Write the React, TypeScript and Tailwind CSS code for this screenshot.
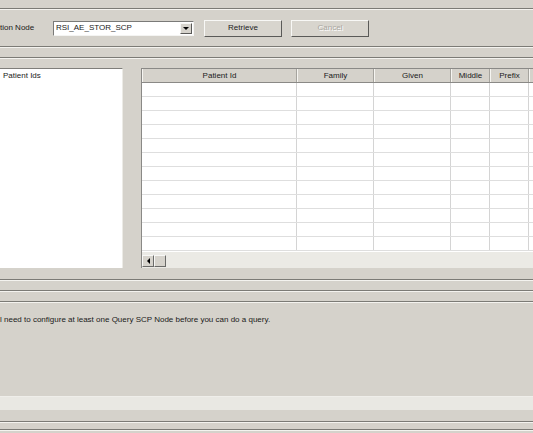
const Etch = () => <div className="h-[2px] border-t border-b border-[#7c7b76] border-b-[#f4f3ef]" />

const columns = [
  { name: "Patient Id", w: "w-[155px]" },
  { name: "Family", w: "w-[77px]" },
  { name: "Given", w: "w-[77px]" },
  { name: "Middle", w: "w-[39px]" },
  { name: "Prefix", w: "w-[39px]" },
  { name: "", w: "w-[120px]" },
]

const rows = Array.from({ length: 12 }, (_, i) => i)

const Button = ({ label, disabled }: { label: string; disabled?: boolean }) => (
  <div className="w-[78px] h-[17px] border border-[#f8f8f6] border-r-[#5a5a58] border-b-[#5a5a58] bg-[#d8d5ce] flex items-center justify-center">
    <span
      className={
        disabled
          ? "text-[8px] text-[#a9a7a1] [text-shadow:1px_1px_0_#ffffff]"
          : "text-[8px] text-[#222]"
      }
    >
      {label}
    </span>
  </div>
)

const ScrollBtn = ({ arrow }: { arrow?: boolean }) => (
  <div className="w-[12px] h-[12px] bg-[#d6d3cc] border border-[#f8f8f6] border-r-[#6a6a68] border-b-[#6a6a68] flex items-center justify-center">
    {arrow && (
      <div className="w-0 h-0 border-y-[3px] border-y-transparent border-r-[3px] border-r-black" />
    )}
  </div>
)

export default function App() {
  return (
    <div className="w-[533px] h-[433px] overflow-hidden bg-[#d5d2cb] text-[#1a1a1a] font-['Liberation_Sans',Arial,sans-serif] leading-none">
      <div className="h-[8px]" />
      <Etch />
      {/* toolbar */}
      <div className="h-[36px] flex items-center">
        <div className="w-[53px] text-[8px] whitespace-nowrap">tion Node</div>
        <div className="w-[141px] h-[15px] bg-white border border-[#7a7a78] border-r-[#f4f4f2] border-b-[#f4f4f2] flex items-center">
          <span className="flex-1 pl-[2px] text-[8px]">RSI_AE_STOR_SCP</span>
          <div className="w-[12px] h-[11px] mr-[1px] bg-[#d6d3cc] border border-[#f8f8f6] border-r-[#5a5a58] border-b-[#5a5a58] flex items-center justify-center">
            <div className="w-0 h-0 border-x-[3px] border-x-transparent border-t-[3px] border-t-black" />
          </div>
        </div>
        <div className="ml-[10px] flex gap-[9px]">
          <Button label="Retrieve" />
          <Button label="Cancel" disabled />
        </div>
      </div>
      <Etch />
      <div className="h-[9px]" />
      <Etch />
      <div className="h-[9px]" />
      {/* main */}
      <div className="h-[200px] flex">
        <div className="w-[123px] bg-white border-t border-[#7f7e7a] border-r border-r-[#ecebe6]">
          <div className="pl-[3px] pt-[3px] text-[8px]">Patient Ids</div>
        </div>
        <div className="ml-[18px] flex-1 flex flex-col overflow-hidden border-t border-l border-[#8a8986]">
          <div className="flex h-[14px] border-b border-[#8a8986] bg-[#d5d2cb]">
            {columns.map((c, i) => (
              <div
                key={i}
                className={`${c.w} shrink-0 border-l border-l-[#f6f5f1] border-r border-r-[#a6a49e] flex items-center justify-center text-[8px]`}
              >
                {c.name}
              </div>
            ))}
          </div>
          <div className="h-[169px] bg-white overflow-hidden">
            {rows.map((r) => (
              <div key={r} className="flex h-[14px] border-b border-[#dedede]">
                {columns.map((c, i) => (
                  <div key={i} className={`${c.w} shrink-0 border-r border-[#d4d4d4]`} />
                ))}
              </div>
            ))}
          </div>
          <div className="flex-1 bg-[#ebeae5] flex items-end pb-[1px]">
            <ScrollBtn arrow />
            <ScrollBtn />
          </div>
        </div>
      </div>
      <div className="h-[11px]" />
      <Etch />
      <div className="h-[9px]" />
      <Etch />
      <div className="h-[9px]" />
      <Etch />
      {/* message */}
      <div className="h-[93px] pt-[13px] whitespace-nowrap">
        <div className="text-[8px]">
          l need to configure at least one Query SCP Node before you can do a query.
        </div>
      </div>
      <div className="h-[14px] bg-[#e9e8e3] border-t border-[#efeeea]" />
      <div className="h-[11px]" />
      <Etch />
      <div className="h-[6px]" />
      <Etch />
    </div>
  )
}
